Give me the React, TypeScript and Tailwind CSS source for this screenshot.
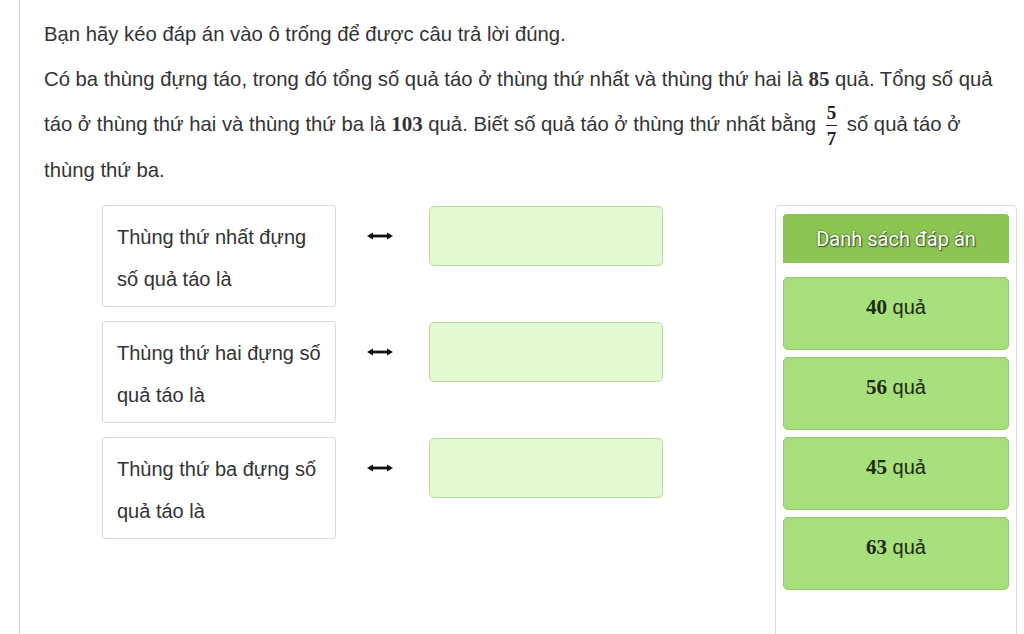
import React from "react";

const sans = { fontFamily: '"Liberation Sans", Arial, sans-serif' };
const serif = { fontFamily: '"Liberation Serif", "Times New Roman", serif' };

function Num({ children }: { children: React.ReactNode }) {
  return (
    <span className="font-bold text-[21px]" style={serif}>
      {children}
    </span>
  );
}

function Arrow() {
  return (
    <svg width="26" height="10" viewBox="0 0 26 10" className="block">
      <path d="M4 5 H22" stroke="#111" strokeWidth="2.8" />
      <path d="M0 5 L6 1.5 L6 8.5 Z" fill="#111" />
      <path d="M26 5 L20 1.5 L20 8.5 Z" fill="#111" />
    </svg>
  );
}

function Row({ l1, l2 }: { l1: string; l2: string }) {
  return (
    <div className="flex items-start">
      <div className="w-[234px] h-[102px] border border-[#d9d9d9] rounded-[3px] bg-white pl-[14px] pt-[10px] text-[20px] text-[#333] leading-[42px]">
        <div>{l1}</div>
        <div>{l2}</div>
      </div>
      <div className="w-[93px] h-[62px] flex items-center pl-[31px]">
        <Arrow />
      </div>
      <div className="mt-[1px] w-[234px] h-[60px] rounded-[5px] border border-[#b6d99c] bg-[#e2fad2]" />
    </div>
  );
}

function Answer({ n }: { n: string }) {
  return (
    <div className="h-[73px] rounded-[5px] border border-[#94c96c] bg-[#a7df7c] text-center pt-[11px] leading-[36px] text-[20px] text-[#1e2a14]">
      <Num>{n}</Num>
      <span style={sans}> quả</span>
    </div>
  );
}

export default function App() {
  return (
    <div className="w-[1024px] h-[634px] overflow-hidden bg-white" style={sans}>
      <div className="ml-[19px] h-full border-l border-[#cfcfcf] pl-[24px] pt-[12px] text-[#333]">
        <p className="text-[20.3px] leading-[45px] whitespace-nowrap">
          Bạn hãy kéo đáp án vào ô trống để được câu trả lời đúng.
        </p>
        <p className="text-[20.3px] leading-[45px] whitespace-nowrap">
          Có ba thùng đựng táo, trong đó tổng số quả táo ở thùng thứ nhất và thùng thứ hai là <Num>85</Num> quả. Tổng số quả
          <br />
          táo ở thùng thứ hai và thùng thứ ba là <Num>103</Num> quả. Biết số quả táo ở thùng thứ nhất bằng{" "}
          <span className="inline-flex flex-col items-center align-middle mx-[4px] leading-none font-bold text-[19px] text-[#222]" style={serif}>
            <span className="px-[1px]">5</span>
            <span className="w-full border-t-[1.5px] border-[#222] my-[3px]" />
            <span className="px-[1px]">7</span>
          </span>{" "}
          số quả táo ở
          <br />
          thùng thứ ba.
        </p>
        <div className="flex mt-[12px]">
          <div className="ml-[58px] flex flex-col gap-[14px]">
            <Row l1="Thùng thứ nhất đựng" l2="số quả táo là" />
            <Row l1="Thùng thứ hai đựng số" l2="quả táo là" />
            <Row l1="Thùng thứ ba đựng số" l2="quả táo là" />
          </div>
          <div className="ml-[112px] w-[242px] h-[460px] border border-[#dcdcdc] rounded-[4px] px-[7px] pt-[8px] flex flex-col">
            <div
              className="h-[49px] rounded-t-[4px] bg-[#8bc452] flex items-center justify-center text-white text-[20px]"
              style={{ fontFamily: 'Roboto, "Liberation Sans", sans-serif', textShadow: "0 0 2px #3b5a20, 1px 1px 1px #3b5a20" }}
            >
              Danh sách đáp án
            </div>
            <div className="mt-[14px] flex flex-col gap-[7px]">
              <Answer n="40" />
              <Answer n="56" />
              <Answer n="45" />
              <Answer n="63" />
            </div>
          </div>
        </div>
      </div>
    </div>
  );
}
